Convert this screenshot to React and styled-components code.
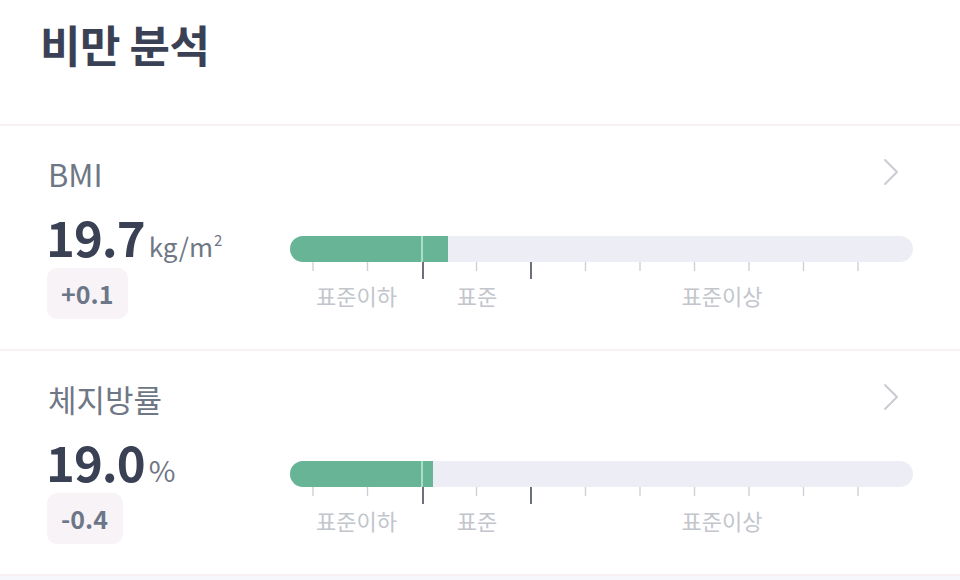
import React from "react";
import styled, { createGlobalStyle } from "styled-components";

const metrics = [
	{ label: "BMI", value: "19.7", unit: "kg/m", sup: "2", diff: "+0.1", fill: 158 },
	{ label: "체지방률", value: "19.0", unit: "%", diff: "-0.4", fill: 143 },
];

const BAR_WIDTH = 623;
const LOW_END = 133;
const NORMAL_END = 241;
const ticks = Array.from({ length: 11 }, (_, i) => 23 + i * 54.5);

const segments = [
	{ title: "표준이하", width: LOW_END },
	{ title: "표준", width: NORMAL_END - LOW_END },
	{ title: "표준이상", width: BAR_WIDTH - NORMAL_END },
];

function Chevron() {
	return (
		<ChevronIcon width="16" height="28" viewBox="0 0 16 28">
			<polyline points="2,2 14,14 2,26" />
		</ChevronIcon>
	);
}

function Scale() {
	return (
		<ScaleSvg viewBox={`0 0 ${BAR_WIDTH} 18`} preserveAspectRatio="none">
			{ticks.map((x, i) => {
				const near = [LOW_END, NORMAL_END].find((b) => Math.abs(x - b) < 3);
				const pos = near ?? x;
				return (
					<line
						key={i}
						x1={pos}
						x2={pos}
						y1="0"
						y2={near ? 17 : 9}
						stroke={near ? "#5d616b" : "#cdd0d6"}
						strokeWidth={near ? 1.8 : 1.4}
					/>
				);
			})}
		</ScaleSvg>
	);
}

function Metric({ label, value, unit, sup, diff, fill }) {
	return (
		<Section>
			<Head>
				<Label>{label}</Label>
				<Chevron />
			</Head>
			<Body>
				<Left>
					<ValueRow>
						<Value>{value}</Value>
						<Unit $large={!sup}>
							{unit}
							{sup && <Sup>{sup}</Sup>}
						</Unit>
					</ValueRow>
					<Badge>{diff}</Badge>
				</Left>
				<Gauge>
					<Track>
						<Fill style={{ width: `${(fill / BAR_WIDTH) * 100}%` }}>
							<LowPart style={{ width: `${(LOW_END / fill) * 100}%` }} />
						</Fill>
					</Track>
					<Scale />
					<Labels>
						{segments.map((s) => (
							<SegLabel key={s.title} style={{ width: `${(s.width / BAR_WIDTH) * 100}%` }}>
								{s.title}
							</SegLabel>
						))}
					</Labels>
				</Gauge>
			</Body>
		</Section>
	);
}

function App() {
	return (
		<>
			<GlobalStyle />
			<Page>
				<Header>
					<Title>비만 분석</Title>
				</Header>
				{metrics.map((m) => (
					<Metric key={m.label} {...m} />
				))}
				<Footer />
			</Page>
		</>
	);
}

export default App;

const GlobalStyle = createGlobalStyle`
	* { box-sizing: border-box; }
	body {
		margin: 0;
		background: #ffffff;
		font-family: "Noto Sans CJK KR", "Noto Sans", sans-serif;
	}
`;

const Page = styled.div`
	width: 960px;
	height: 580px;
	overflow: hidden;
	background: #ffffff;
`;

const Header = styled.header`
	height: 126px;
	padding: 14px 0 0 40px;
	border-bottom: 2px solid #f8f1f3;
`;

const Title = styled.h1`
	margin: 0;
	font-size: 44px;
	line-height: 60px;
	font-weight: 700;
	letter-spacing: -0.5px;
	color: #3a4154;
`;

const Section = styled.section`
	padding: 28px 47px 30px 48px;
	border-bottom: 2px solid #f8f1f3;
`;

const Head = styled.div`
	display: flex;
	align-items: center;
	justify-content: space-between;
	height: 40px;
	padding-right: 14px;
`;

const Label = styled.div`
	font-size: 31px;
	line-height: 40px;
	color: #6f7785;
`;

const ChevronIcon = styled.svg`
	fill: none;
	stroke: #c9ccd2;
	stroke-width: 2;
	stroke-linecap: round;
	stroke-linejoin: round;
	margin-top: -4px;
`;

const Body = styled.div`
	display: grid;
	grid-template-columns: 242px 1fr;
	margin-top: 14px;
`;

const Left = styled.div`
	display: flex;
	flex-direction: column;
	align-items: flex-start;
	margin-left: -2px;
`;

const ValueRow = styled.div`
	display: flex;
	align-items: baseline;
	height: 56px;
	line-height: 56px;
`;

const Value = styled.span`
	font-size: 49px;
	font-weight: 700;
	letter-spacing: -1px;
	color: #3a4154;
`;

const Unit = styled.span`
	margin-left: 4px;
	font-size: ${(p) => (p.$large ? "29px" : "26px")};
	color: #6f7785;
`;

const Sup = styled.span`
	margin-left: 1px;
	font-size: 15px;
	vertical-align: 11px;
	line-height: 0;
`;

const Badge = styled.div`
	display: inline-flex;
	align-items: center;
	height: 51px;
	margin-top: 4px;
	margin-left: 1px;
	padding: 0 15px 2px 14px;
	border-radius: 10px;
	background: #f7f3f6;
	font-size: 25px;
	font-weight: 700;
	color: #6b7689;
`;

const Gauge = styled.div`
	padding-top: 28px;
`;

const Track = styled.div`
	height: 26px;
	border-radius: 13px;
	background: #ededf6;
	overflow: hidden;
`;

const Fill = styled.div`
	display: flex;
	height: 100%;
	background: #67b596;
`;

const LowPart = styled.div`
	height: 100%;
	border-right: 2px solid #a9dfc6;
	flex: none;
	margin-right: -1px;
`;

const ScaleSvg = styled.svg`
	display: block;
	width: 100%;
	height: 18px;
`;

const Labels = styled.div`
	display: flex;
	margin-top: 1px;
`;

const SegLabel = styled.div`
	text-align: center;
	font-size: 22px;
	line-height: 28px;
	color: #c2c5cc;
`;

const Footer = styled.div`
	height: 40px;
	background: #f5f7fc;
`;
